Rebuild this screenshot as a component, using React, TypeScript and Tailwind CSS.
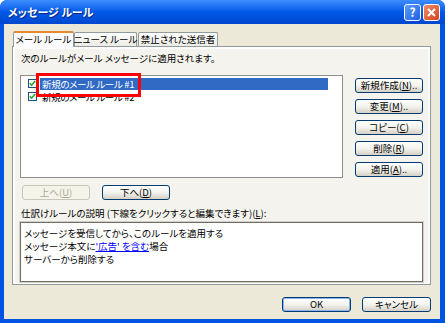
import React from 'react';

const XpButton: React.FC<{ children: React.ReactNode; width?: string; disabled?: boolean; isDefault?: boolean }> = ({
  children,
  width = 'w-[68px]',
  disabled,
  isDefault,
}) => (
  <button
    className={
      `${width} h-[15px] rounded-[3px] border flex items-center justify-center text-[9.5px] leading-none whitespace-nowrap ` +
      (disabled
        ? 'border-[#c9c7ba] bg-[#f5f4ea] text-[#aca899]'
        : 'border-[#003c74] bg-gradient-to-b from-[#ffffff] via-[#f3f3ee] to-[#d6d0c5] text-black') +
      (isDefault ? ' shadow-[inset_0_0_0_1px_#8fb2f0]' : '')
    }
  >
    {children}
  </button>
);

const CheckBox: React.FC = () => (
  <span className="w-[9px] h-[9px] border border-[#1c5180] bg-white flex items-center justify-center shrink-0">
    <svg width="7" height="7" viewBox="0 0 7 7">
      <path d="M0.8 3.2 L2.6 5.2 L6.2 1" stroke="#21a121" strokeWidth="1.5" fill="none" />
    </svg>
  </span>
);

const App: React.FC = () => {
  const sideButtons = [
    { label: '新規作成', key: 'N', dots: true },
    { label: '変更', key: 'M', dots: true },
    { label: 'コピー', key: 'C', dots: false },
    { label: '削除', key: 'R', dots: false },
    { label: '適用', key: 'A', dots: true },
  ];

  return (
    <div className="w-[445px] h-[323px] bg-[#0054e3] rounded-t-[7px] flex flex-col [font-family:'Noto_Sans_CJK_JP',sans-serif] [font-feature-settings:'palt'] overflow-hidden">
      {/* title bar */}
      <div className="h-[24px] shrink-0 flex items-center justify-between pl-[8px] pr-[5px] bg-gradient-to-b from-[#3d8dff] via-[#0058e6] to-[#0047cf]">
        <span className="text-white text-[11px] font-bold [text-shadow:1px_1px_0_#0a2a85]">メッセージ ルール</span>
        <div className="flex gap-[2px]">
          <div className="w-[17px] h-[17px] rounded-[3px] border border-white bg-gradient-to-br from-[#5b9bff] to-[#1f5fe0] flex items-center justify-center text-white text-[12px] font-bold leading-none">
            ?
          </div>
          <div className="w-[17px] h-[17px] rounded-[3px] border border-white bg-gradient-to-br from-[#f08a66] to-[#d2431c] flex items-center justify-center">
            <svg width="9" height="9" viewBox="0 0 9 9">
              <path d="M1 1 L8 8 M8 1 L1 8" stroke="white" strokeWidth="2" />
            </svg>
          </div>
        </div>
      </div>

      {/* body */}
      <div className="flex-1 ml-[4px] mr-[5px] mb-[4px] bg-[#ece9d8] flex flex-col pt-[8px] pl-[8px] pr-[9px]">
        {/* tabs */}
        <div className="flex items-end h-[14px] pl-[1px] relative z-10 whitespace-nowrap text-[9.5px] leading-none text-black">
          <div className="w-[61px] h-[16px] -mb-[1px] bg-[#fcfcfe] border border-b-0 border-[#919b9c] border-t-[2px] border-t-[#e68b2c] rounded-t-[2px] flex items-center justify-center">
            メール ルール
          </div>
          <div className="w-[63px] h-[14px] bg-gradient-to-b from-[#ffffff] to-[#ecebe6] border border-b-0 border-[#919b9c] rounded-t-[2px] flex items-center justify-center">
            ニュース ルール
          </div>
          <div className="w-[80px] h-[14px] ml-[1px] bg-gradient-to-b from-[#ffffff] to-[#ecebe6] border border-b-0 border-[#919b9c] rounded-t-[2px] flex items-center justify-center">
            禁止された送信者
          </div>
        </div>

        {/* tab panel */}
        <div className="h-[239px] border border-[#919b9c] bg-[#f4f3ee] shadow-[inset_0_0_0_2px_#fcfcfe] pl-[7px] pr-[7px] pt-[5px] flex flex-col text-[9.5px] text-black whitespace-nowrap">
          <div className="h-[12px] leading-[12px] pl-[1px]">次のルールがメール メッセージに適用されます。</div>

          <div className="flex mt-[11px] gap-[12px]">
            {/* rules list */}
            <div className="w-[323px] h-[103px] border border-[#8d8d8d] bg-white pt-[1px] relative tracking-[-0.35px]">
              <div className="flex items-center h-[13px] pl-[7px] gap-[3px]">
                <CheckBox />
                <div className="w-[288px] h-[12px] bg-[#316ac5] text-white leading-[12px] pl-[2px]">新規のメール ルール #1</div>
              </div>
              <div className="flex items-center h-[13px] pl-[7px] gap-[3px]">
                <CheckBox />
                <div className="h-[12px] leading-[12px] pl-[2px]">新規のメール ルール #2</div>
              </div>
              {/* red highlight annotation */}
              <div className="absolute left-[15px] top-[-3px] w-[105px] h-[24px] border-[3px] border-[#ff0000]" />
            </div>

            {/* side buttons */}
            <div className="flex flex-col gap-[6px] pt-[3px]">
              {sideButtons.map((b) => (
                <XpButton key={b.key}>
                  {b.label}(<u>{b.key}</u>){b.dots ? '..' : ''}
                </XpButton>
              ))}
            </div>
          </div>

          <div className="flex gap-[12px] mt-[7px] ml-[2px]">
            <XpButton disabled>
              上へ(<u>U</u>)
            </XpButton>
            <XpButton>
              下へ(<u>D</u>)
            </XpButton>
          </div>

          <div className="h-[12px] leading-[12px] mt-[7px] pl-[1px]">
            仕訳けルールの説明 (下線をクリックすると編集できます)(<u>L</u>):
          </div>

          <div className="w-[403px] h-[60px] mt-[3px] border border-[#6f6d64] bg-white shadow-[0_0_0_1px_#d4d0c8] pl-[3px] pt-[4px] flex flex-col gap-[1px]">
            <div className="h-[12px] leading-[12px]">メッセージを受信してから、このルールを適用する</div>
            <div className="h-[12px] leading-[12px]">
              メッセージ本文に<span className="text-[#0000ff] underline">'広告' を含む</span>場合
            </div>
            <div className="h-[12px] leading-[12px]">サーバーから削除する</div>
          </div>
        </div>

        {/* dialog buttons */}
        <div className="flex justify-end gap-[11px] mt-[12px]">
          <XpButton width="w-[69px]" isDefault>
            OK
          </XpButton>
          <XpButton width="w-[69px]">キャンセル</XpButton>
        </div>
      </div>
    </div>
  );
};

export default App;
